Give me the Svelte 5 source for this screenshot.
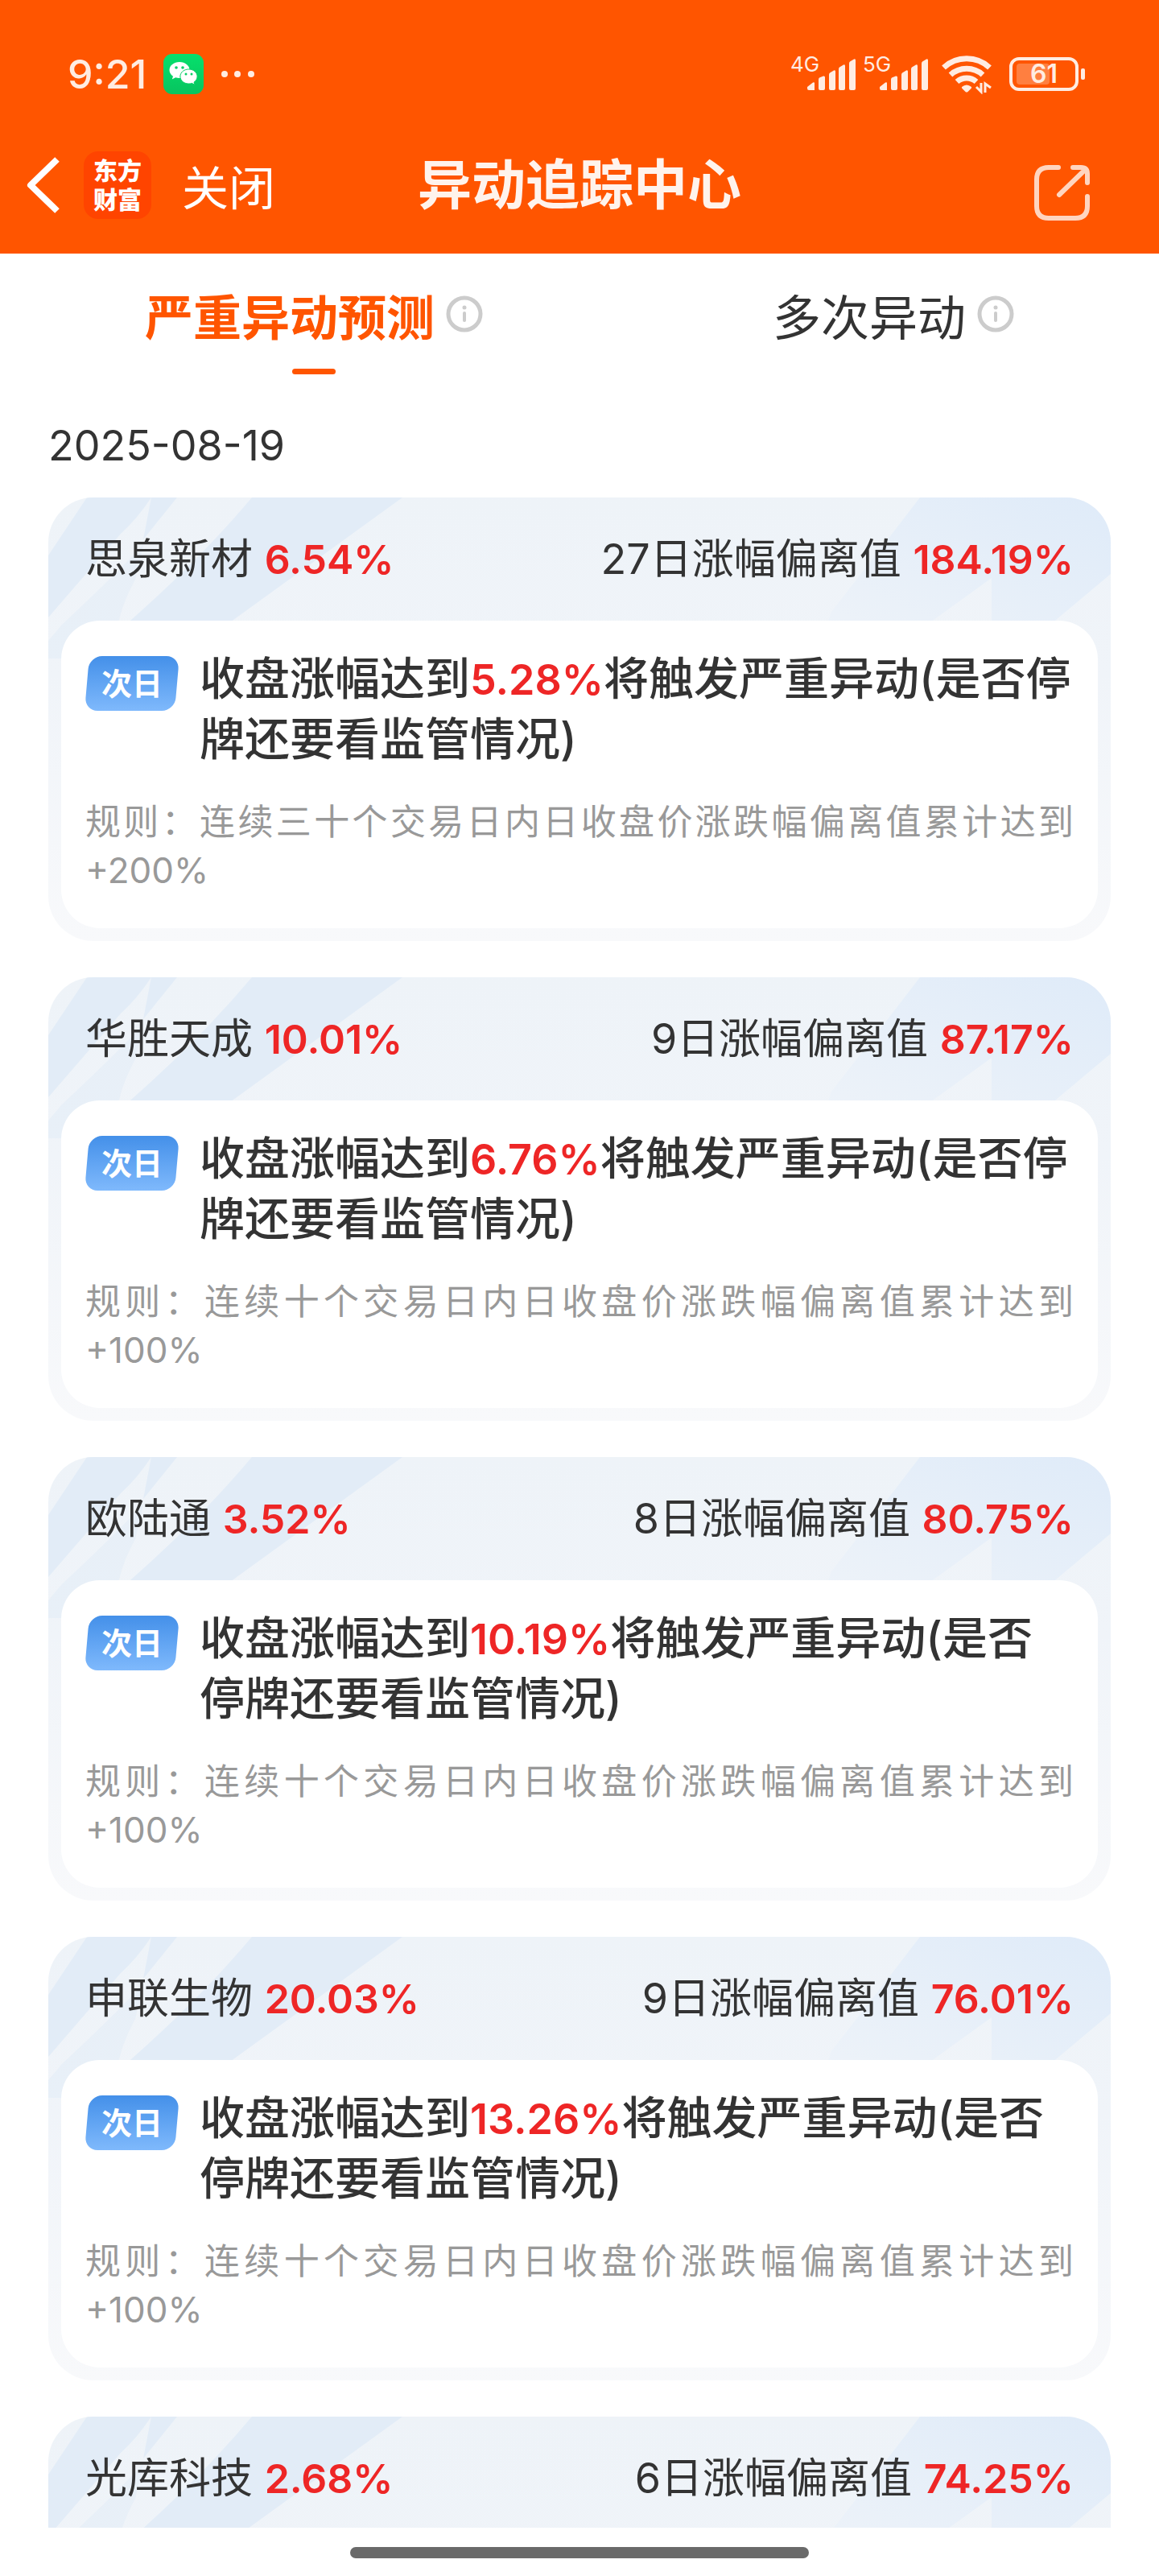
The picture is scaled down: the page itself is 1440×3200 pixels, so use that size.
<script lang="ts">
    interface Stock {
        name: string;
        change: string;
        days: number;
        deviation: string;
        trigger?: string;
        rule?: string;
    }

    let activeTab = $state(0);

    const tabs = ["严重异动预测", "多次异动"];
    const networks = ["4G", "5G"];

    const stocks: Stock[] = [
        {
            name: "思泉新材",
            change: "6.54%",
            days: 27,
            deviation: "184.19%",
            trigger: "5.28%",
            rule: "连续三十个交易日内日收盘价涨跌幅偏离值累计达到+200%",
        },
        {
            name: "华胜天成",
            change: "10.01%",
            days: 9,
            deviation: "87.17%",
            trigger: "6.76%",
            rule: "连续十个交易日内日收盘价涨跌幅偏离值累计达到+100%",
        },
        {
            name: "欧陆通",
            change: "3.52%",
            days: 8,
            deviation: "80.75%",
            trigger: "10.19%",
            rule: "连续十个交易日内日收盘价涨跌幅偏离值累计达到+100%",
        },
        {
            name: "申联生物",
            change: "20.03%",
            days: 9,
            deviation: "76.01%",
            trigger: "13.26%",
            rule: "连续十个交易日内日收盘价涨跌幅偏离值累计达到+100%",
        },
        { name: "光库科技", change: "2.68%", days: 6, deviation: "74.25%" },
    ];
</script>

<div class="screen">
    <header>
        <div class="status">
            <div class="status-left">
                <span class="time">9:21</span>
                <svg width="50" height="50" viewBox="0 0 50 50">
                    <defs>
                        <linearGradient id="wechat" x1="0" y1="0" x2="0" y2="1">
                            <stop offset="0" stop-color="#06e06c" />
                            <stop offset="1" stop-color="#07c45f" />
                        </linearGradient>
                    </defs>
                    <rect width="50" height="50" rx="11" fill="url(#wechat)" />
                    <path
                        d="M20 10c-7 0-12.500 4.400-12.500 10 0 3.200 1.700 5.900 4.500 7.700l-1.200 3.800 4.300-2.300c1.500.5 3.200.8 4.900.8 7 0 12.500-4.500 12.500-10S27 10 20 10z"
                        fill="#fff"
                    />
                    <path
                        d="M31.500 19c-6 0-10.600 4-10.600 9s4.600 9 10.600 9c1.400 0 2.700-.2 4-.6l3.500 1.900-1-3.200c2.600-1.700 4.100-4.200 4.100-7.100 0-5-4.600-9-10.600-9z"
                        fill="#fff"
                        stroke="#07d066"
                    />
                    <g fill="#07d066">
                        <circle cx="16" cy="17" r="1.800" />
                        <circle cx="24" cy="17" r="1.800" />
                        <circle cx="28" cy="25" r="1.500" />
                        <circle cx="35" cy="25" r="1.500" />
                    </g>
                </svg>
                <svg width="44" height="10" viewBox="0 0 44 10" fill="#ffece2">
                    <circle cx="5" cy="5" r="4" />
                    <circle cx="21" cy="5" r="4" />
                    <circle cx="38" cy="5" r="4" />
                </svg>
            </div>
            <div class="status-right">
                {#each networks as network}
                    <svg width="82" height="64" viewBox="0 -8 82 64" fill="#ffece2">
                        <text x="0" y="21" class="network">{network}</text>
                        <path
                            d="M21 40l7-5.500q2-1 2 1V44h-7q-2 0-2-2zM35 31q0-2 1-2.500l5-2q2-.5 2 1.500v14q0 2-2 2h-4q-2 0-2-2zM48 25q0-2 1-2.500l5-3q2-1 2 1.500v21q0 2-2 2h-4q-2 0-2-2zM60 18q0-2 1-2.500l5-3q2-1 2 1.500v28q0 2-2 2h-4q-2 0-2-2zM73 11q0-2 1-2.500l5-3q2-1 2 1.500v35q0 2-2 2h-4q-2 0-2-2z"
                        />
                    </svg>
                {/each}
                <svg class="wifi" width="64" height="50" viewBox="0 0 64 50" fill="none" stroke="#ffece2">
                    <path d="M2.500 17a42 42 0 0 1 57 0" stroke-width="7" />
                    <path d="M11 26a30 30 0 0 1 40 0" stroke-width="7" />
                    <path d="M19 34.500a18 18 0 0 1 24 0" stroke-width="7" />
                    <path
                        d="M25 41q6-5 12 0 .5 1-.5 2l-4 4q-1.500 1-3 0l-4-4q-1-1-.5-2z"
                        fill="#ffece2"
                        stroke="none"
                    />
                    <path d="M49 36v11l-6-6M54 48V37l7 5" stroke-width="3" />
                </svg>
                <svg width="96" height="42" viewBox="0 0 96 42">
                    <rect x="2" y="2" width="82" height="38" rx="10" fill="none" stroke="#ffece2" stroke-width="4" />
                    <rect x="9" y="8" width="41" height="26" rx="4" fill="#ff7f40" />
                    <rect x="89" y="14" width="5" height="14" rx="2" fill="#ffece2" />
                    <text x="43" y="32" class="battery">61</text>
                </svg>
            </div>
        </div>
        <nav>
            <div class="nav-left">
                <button class="back" aria-label="返回">
                    <svg width="44" height="70" viewBox="0 0 44 70" fill="none" stroke="#fff" stroke-width="8">
                        <path d="M39 3L6 35l33 32" stroke-linejoin="round" />
                    </svg>
                </button>
                <a class="logo" href="#home"><span>东方</span><span>财富</span></a>
                <button class="close">关闭</button>
            </div>
            <h1>异动追踪中心</h1>
            <button class="share" aria-label="分享">
                <svg
                    width="72"
                    height="72"
                    viewBox="0 0 72 72"
                    fill="none"
                    stroke="#ffd5c0"
                    stroke-width="6"
                    stroke-linecap="round"
                    stroke-linejoin="round"
                >
                    <path d="M31 4H19Q4 4 4 19v33q0 15 15 15h33q15 0 15-15V40" />
                    <path d="M49 4h10q8 0 8 8v11M64 7L32 38" />
                </svg>
            </button>
        </nav>
    </header>

    <div class="tabs">
        {#each tabs as tab, i}
            <button class="tab" class:active={activeTab === i} onclick={() => (activeTab = i)}>
                {tab}
                <svg width="46" height="46" viewBox="0 0 46 46" fill="none" stroke="#ccc">
                    <circle cx="23" cy="23" r="20" stroke-width="5" />
                    <path d="M23 22v9" stroke-width="4" stroke-linecap="round" />
                    <circle cx="23" cy="15" r="2.500" fill="#ccc" stroke="none" />
                </svg>
            </button>
        {/each}
    </div>

    <main>
        <time datetime="2025-08-19">2025-08-19</time>
        {#each stocks as stock}
            <article>
                <svg class="rays left" width="440" height="200" viewBox="0 0 440 200" fill="#e2ecf7">
                    <path d="M48 0h80Q110 27 90 45L0 149V72z" />
                    <path d="M128 0h32l-42 52z" />
                    <path d="M253 0h187L230 152 200 175H80l23-23Q190 75 253 0z" />
                    <path d="M118 58Q95 85 17 158L0 178v22h70l18-48q6-25 20-50 6-22 10-44z" opacity=".6" />
                </svg>
                <svg class="rays right" width="360" height="180" viewBox="0 0 360 180">
                    <defs>
                        <linearGradient id="ray" x1="0" y1="1" x2="1" y2="0">
                            <stop offset="0" stop-color="#eef3f9" />
                            <stop offset="1" stop-color="#dfebf9" />
                        </linearGradient>
                    </defs>
                    <path
                        d="M123 0h237v95l-68 57-30 28h-50V100l-72 52-30 28H0l13-38 70-90z"
                        fill="url(#ray)"
                    />
                </svg>
                <div class="summary">
                    <p>{stock.name} <b>{stock.change}</b></p>
                    <p>{stock.days}日涨幅偏离值 <b>{stock.deviation}</b></p>
                </div>
                {#if stock.trigger}
                    <div class="detail">
                        <div class="forecast">
                            <span class="badge">次日</span>
                            <p>收盘涨幅达到<b>{stock.trigger}</b>将触发严重异动(是否停牌还要看监管情况)</p>
                        </div>
                        <p class="rule">规则：{stock.rule}</p>
                    </div>
                {/if}
            </article>
        {/each}
    </main>

    <footer>
        <div class="home-bar"></div>
    </footer>
</div>

<style>
    :global(body) {
        margin: 0;
        background-color: #fff;
    }

    .screen {
        display: flex;
        flex-direction: column;
        height: 100vh;
        font-family: Inter, "Noto Sans CJK SC", sans-serif;
        color: #333;
    }

    svg {
        display: block;
    }

    p,
    h1 {
        margin: 0;
    }

    button {
        border: none;
        padding: 0;
        background: none;
        font-family: inherit;
        color: inherit;
        cursor: pointer;
    }

    header {
        flex: none;
        background-color: #ff5500;
        color: #fff3ec;
    }

    .status {
        display: flex;
        justify-content: space-between;
        align-items: center;
        height: 56px;
        padding: 64px 90px 25px 84px;
    }

    .status-left,
    .status-right {
        display: flex;
        align-items: center;
    }

    .status-left {
        gap: 21px;
    }

    .status-right {
        gap: 8px;
    }

    .time {
        font-size: 50px;
        font-weight: 500;
        color: #ffece2;
    }

    .network {
        font-size: 26px;
    }

    .battery {
        font-size: 32px;
        font-weight: 600;
        fill: #ffece2;
        text-anchor: middle;
    }

    .wifi {
        margin: 0 12px 0 8px;
    }

    nav {
        display: grid;
        grid-template-columns: 1fr auto 1fr;
        align-items: center;
        height: 170px;
    }

    .nav-left {
        display: flex;
        align-items: center;
        padding-left: 32px;
    }

    .logo {
        display: flex;
        flex-direction: column;
        align-items: center;
        justify-content: center;
        width: 84px;
        height: 84px;
        margin: 0 38px 0 28px;
        border-radius: 18px;
        background-color: #ff4400;
        color: #fff;
        font-size: 30px;
        font-weight: 800;
        line-height: 36px;
        text-decoration: none;
    }

    .close {
        font-size: 58px;
        color: #fff;
    }

    h1 {
        font-size: 67px;
        font-weight: 600;
        line-height: 80px;
    }

    .share {
        justify-self: end;
        padding: 20px 84px 0 0;
    }

    .tabs {
        flex: none;
        display: flex;
        justify-content: space-around;
        height: 150px;
    }

    .tab {
        position: relative;
        display: flex;
        align-items: center;
        gap: 14px;
        font-size: 60px;
    }

    .active {
        color: #ff5500;
        font-weight: 700;
    }

    .active::after {
        content: "";
        position: absolute;
        left: 50%;
        bottom: 0;
        width: 54px;
        height: 7px;
        margin-left: -27px;
        border-radius: 4px;
        background-color: #ff5500;
    }

    main {
        flex: 1;
        min-height: 0;
        overflow-y: auto;
        scrollbar-width: none;
        padding: 0 60px;
    }

    time {
        display: block;
        padding: 59px 0 34px;
        font-size: 52px;
        line-height: 60px;
    }

    article {
        position: relative;
        box-sizing: border-box;
        min-height: 551px;
        margin-bottom: 45px;
        padding: 0 16px 16px;
        border-radius: 56px;
        overflow: hidden;
        background: linear-gradient(#eef3f8, #f0f4f9 40%, #f8f9fb);
    }

    .rays {
        position: absolute;
        top: 0;
    }

    .left {
        left: 0;
    }

    .right {
        right: 0;
    }

    .summary {
        position: relative;
        display: flex;
        justify-content: space-between;
        padding: 0 30px;
        font-size: 52px;
        line-height: 153px;
    }

    b {
        font-size: 50px;
        font-weight: 600;
        line-height: 1;
        color: #ee2626;
    }

    .detail {
        position: relative;
        padding: 35px 30px 42px;
        border-radius: 48px;
        background-color: #fff;
    }

    .forecast {
        display: flex;
        gap: 26px;
        font-size: 56px;
        font-weight: 500;
        line-height: 75px;
    }

    .forecast b {
        font-size: 52px;
    }

    .badge {
        position: relative;
        z-index: 0;
        flex: none;
        width: 116px;
        height: 68px;
        margin-top: 9px;
        font-size: 38px;
        font-weight: 700;
        line-height: 68px;
        text-align: center;
        color: #fff;
    }

    .badge::before {
        content: "";
        position: absolute;
        z-index: -1;
        inset: 0 2px;
        border-radius: 16px;
        background: linear-gradient(#4490e9, #7fb9fc);
        transform: skewX(-5deg);
    }

    .rule {
        margin-top: 35px;
        font-size: 44px;
        line-height: 60px;
        text-align: justify;
        color: #999;
    }

    footer {
        flex: none;
        display: flex;
        justify-content: center;
        height: 60px;
    }

    .home-bar {
        width: 570px;
        height: 14px;
        margin-top: 24px;
        border-radius: 7px;
        background-color: #6a6a6a;
    }
</style>
